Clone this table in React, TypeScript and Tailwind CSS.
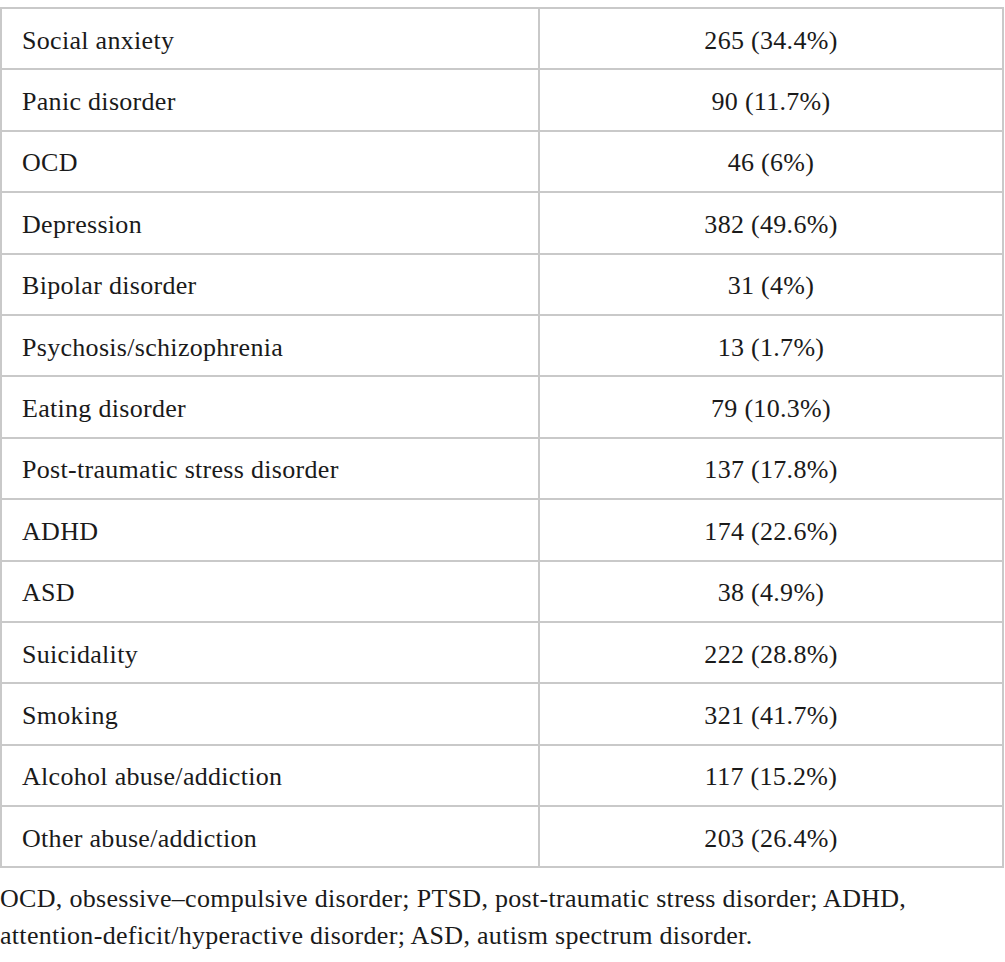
const rows: [string, string][] = [
  ['Social anxiety', '265 (34.4%)'],
  ['Panic disorder', '90 (11.7%)'],
  ['OCD', '46 (6%)'],
  ['Depression', '382 (49.6%)'],
  ['Bipolar disorder', '31 (4%)'],
  ['Psychosis/schizophrenia', '13 (1.7%)'],
  ['Eating disorder', '79 (10.3%)'],
  ['Post-traumatic stress disorder', '137 (17.8%)'],
  ['ADHD', '174 (22.6%)'],
  ['ASD', '38 (4.9%)'],
  ['Suicidality', '222 (28.8%)'],
  ['Smoking', '321 (41.7%)'],
  ['Alcohol abuse/addiction', '117 (15.2%)'],
  ['Other abuse/addiction', '203 (26.4%)'],
]

export default function App() {
  return (
    <div className="w-[1005px] h-[962px] bg-white text-[#1a1a1a] font-['Liberation_Serif',serif] pt-[7px] tracking-[0.3px]">
      <table className="w-[1004px] border-collapse text-[26px]">
        <tbody>
          {rows.map(([label, value]) => (
            <tr key={label} className="h-[61.4px]">
              <td className="w-[538px] border-2 border-[#c9c9c9] pl-[20px] pt-[3px] align-middle">{label}</td>
              <td className="border-2 border-[#c9c9c9] pt-[3px] text-center align-middle">{value}</td>
            </tr>
          ))}
        </tbody>
      </table>
      <p className="mt-[12px] text-[26px] leading-[37px]">
        OCD, obsessive–compulsive disorder; PTSD, post-traumatic stress disorder; ADHD,
        <br />
        attention-deficit/hyperactive disorder; ASD, autism spectrum disorder.
      </p>
    </div>
  )
}
